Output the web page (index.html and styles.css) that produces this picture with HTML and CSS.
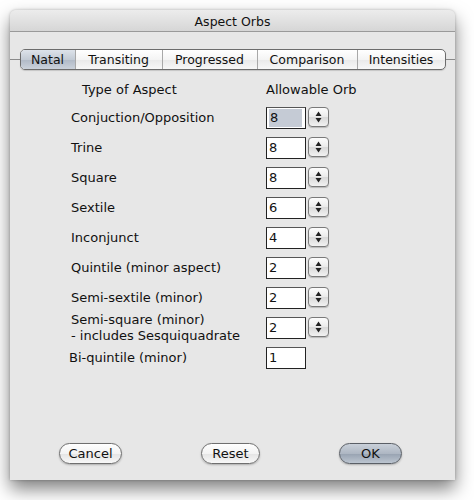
FILE: index.html
```html
<!DOCTYPE html>
<html>
<head>
<meta charset="utf-8">
<link rel="stylesheet" href="styles.css">
</head>
<body>
<div class="window">
  <div class="titlebar">Aspect Orbs</div>
  <div class="tabrow">
    <div class="tabline"></div>
    <div class="tabs">
      <div class="tab tab-natal selected">Natal</div>
      <div class="tab tab-transiting">Transiting</div>
      <div class="tab tab-progressed">Progressed</div>
      <div class="tab tab-comparison">Comparison</div>
      <div class="tab tab-intensities">Intensities</div>
    </div>
    <div class="tabline"></div>
  </div>
  <div class="orbs">
    <div class="head head-type">Type of Aspect</div>
    <div class="head">Allowable Orb</div>

    <div class="label">Conjuction/Opposition</div>
    <div class="field"><div class="box"><span class="sel">8</span></div><div class="stepper"><svg width="21" height="20" viewBox="0 0 21 20"><path d="M10.5 4.5 L13.5 9 L7.5 9 Z M7.5 11 L13.5 11 L10.5 15.5 Z" fill="#222"/></svg></div></div>

    <div class="label">Trine</div>
    <div class="field"><div class="box">8</div><div class="stepper"><svg width="21" height="20" viewBox="0 0 21 20"><path d="M10.5 4.5 L13.5 9 L7.5 9 Z M7.5 11 L13.5 11 L10.5 15.5 Z" fill="#222"/></svg></div></div>

    <div class="label">Square</div>
    <div class="field"><div class="box">8</div><div class="stepper"><svg width="21" height="20" viewBox="0 0 21 20"><path d="M10.5 4.5 L13.5 9 L7.5 9 Z M7.5 11 L13.5 11 L10.5 15.5 Z" fill="#222"/></svg></div></div>

    <div class="label">Sextile</div>
    <div class="field"><div class="box">6</div><div class="stepper"><svg width="21" height="20" viewBox="0 0 21 20"><path d="M10.5 4.5 L13.5 9 L7.5 9 Z M7.5 11 L13.5 11 L10.5 15.5 Z" fill="#222"/></svg></div></div>

    <div class="label">Inconjunct</div>
    <div class="field"><div class="box">4</div><div class="stepper"><svg width="21" height="20" viewBox="0 0 21 20"><path d="M10.5 4.5 L13.5 9 L7.5 9 Z M7.5 11 L13.5 11 L10.5 15.5 Z" fill="#222"/></svg></div></div>

    <div class="label">Quintile (minor aspect)</div>
    <div class="field"><div class="box">2</div><div class="stepper"><svg width="21" height="20" viewBox="0 0 21 20"><path d="M10.5 4.5 L13.5 9 L7.5 9 Z M7.5 11 L13.5 11 L10.5 15.5 Z" fill="#222"/></svg></div></div>

    <div class="label">Semi-sextile (minor)</div>
    <div class="field"><div class="box">2</div><div class="stepper"><svg width="21" height="20" viewBox="0 0 21 20"><path d="M10.5 4.5 L13.5 9 L7.5 9 Z M7.5 11 L13.5 11 L10.5 15.5 Z" fill="#222"/></svg></div></div>

    <div class="label label-two">Semi-square (minor)<br>- includes Sesquiquadrate</div>
    <div class="field"><div class="box">2</div><div class="stepper"><svg width="21" height="20" viewBox="0 0 21 20"><path d="M10.5 4.5 L13.5 9 L7.5 9 Z M7.5 11 L13.5 11 L10.5 15.5 Z" fill="#222"/></svg></div></div>

    <div class="label label-bi">Bi-quintile (minor)</div>
    <div class="field"><div class="box">1</div></div>
  </div>
  <div class="buttons">
    <div class="btn btn-cancel">Cancel</div>
    <div class="btn btn-reset">Reset</div>
    <div class="btn btn-ok">OK</div>
  </div>
</div>
</body>
</html>
```
FILE: styles.css
```css
html, body {
  margin: 0;
  padding: 0;
  background: #ffffff;
}
body {
  font-family: "DejaVu Sans", "Liberation Sans", sans-serif;
  font-size: 13px;
  color: #111;
  width: 474px;
  height: 500px;
  overflow: hidden;
}
.window {
  margin: 10px 0 0 10px;
  width: 445px;
  height: 470px;
  background: #e7e7e7;
  border-radius: 6px 6px 0 0;
  box-shadow: 0 9px 18px rgba(0, 0, 0, 0.5), 0 0 3px rgba(0, 0, 0, 0.25);
  display: flex;
  flex-direction: column;
  position: relative;
}
.titlebar {
  height: 21px;
  line-height: 23px;
  text-align: center;
  font-size: 12.5px;
  background: linear-gradient(#ececec, #d6d6d6);
  border-radius: 6px 6px 0 0;
  border-bottom: 1px solid #9a9a9a;
}
.tabrow {
  margin-top: 17px;
  display: flex;
  align-items: center;
  height: 21px;
}
.tabline {
  flex: 1;
  height: 1px;
  background: #8a8a8a;
}
.tabs {
  display: flex;
  height: 19px;
  border: 1px solid #6c6c6c;
  border-radius: 5px;
  overflow: hidden;
  background: linear-gradient(#ffffff, #f4f4f4 50%, #e9e9e9 51%, #f7f7f7);
  box-shadow: 0 1px 1px rgba(0,0,0,0.15);
}
.tab {
  font-size: 12.5px;
  line-height: 19px;
  text-align: center;
  border-left: 1px solid #a8a8a8;
}
.tab:first-child { border-left: none; }
.tab-natal { width: 54px; }
.tab-transiting { width: 86px; }
.tab-progressed { width: 94px; }
.tab-comparison { width: 99px; }
.tab-intensities { width: 87px; }
.tab.selected {
  background: linear-gradient(#dde3ea, #c3cbd5 50%, #b0b9c6 51%, #cbd2db);
}
.orbs {
  margin-top: 12px;
  padding-left: 61px;
  display: grid;
  grid-template-columns: 195px auto;
  row-gap: 8px;
  align-items: center;
}
.head {
  height: 16px;
  line-height: 16px;
  margin-bottom: 1px;
}
.head-type { padding-left: 11px; }
.label {
  line-height: 16px;
}
.label-two {
  margin: -5px 0;
}
.label-bi { margin-left: -2px; }
.field {
  display: flex;
  align-items: flex-start;
  gap: 2px;
  height: 22px;
}
.box {
  width: 36px;
  height: 20px;
  border: 1px solid #222;
  border-top-color: #555;
  background: #fff;
  padding: 0 0 0 2px;
  line-height: 20px;
  font-size: 13px;
  display: flex;
}
.sel {
  background: #c5cbd5;
  width: 32px;
  height: 18px;
  line-height: 18px;
  margin-top: 1px;
  padding-left: 1px;
}
.stepper {
  width: 21px;
  height: 20px;
  box-sizing: border-box;
  border: 1px solid #7a7a7a;
  border-radius: 4px;
  background: linear-gradient(#fdfdfd, #eaeaea 50%, #d8d8d8 51%, #f2f2f2);
  box-shadow: 0 1px 1px rgba(0,0,0,0.2);
  display: flex;
  align-items: center;
  justify-content: center;
}
.stepper svg {
  display: block;
  margin: -1px;
}
.buttons {
  margin-top: auto;
  margin-bottom: 16px;
  display: flex;
  padding-left: 49px;
}
.btn {
  height: 19px;
  line-height: 19px;
  text-align: center;
  border: 1px solid #6f6f6f;
  border-radius: 11px;
  background: linear-gradient(#ffffff, #f3f3f3 50%, #e4e4e4 51%, #f8f8f8);
  box-shadow: 0 1px 2px rgba(0,0,0,0.25);
  font-size: 13px;
}
.btn-cancel { width: 61px; }
.btn-reset { width: 57px; margin-left: 79px; }
.btn-ok {
  width: 61px;
  margin-left: 79px;
  background: linear-gradient(#c9d0d9, #aeb7c3 50%, #97a2b1 51%, #bcc5d0);
  border-color: #5a5f66;
}
```
